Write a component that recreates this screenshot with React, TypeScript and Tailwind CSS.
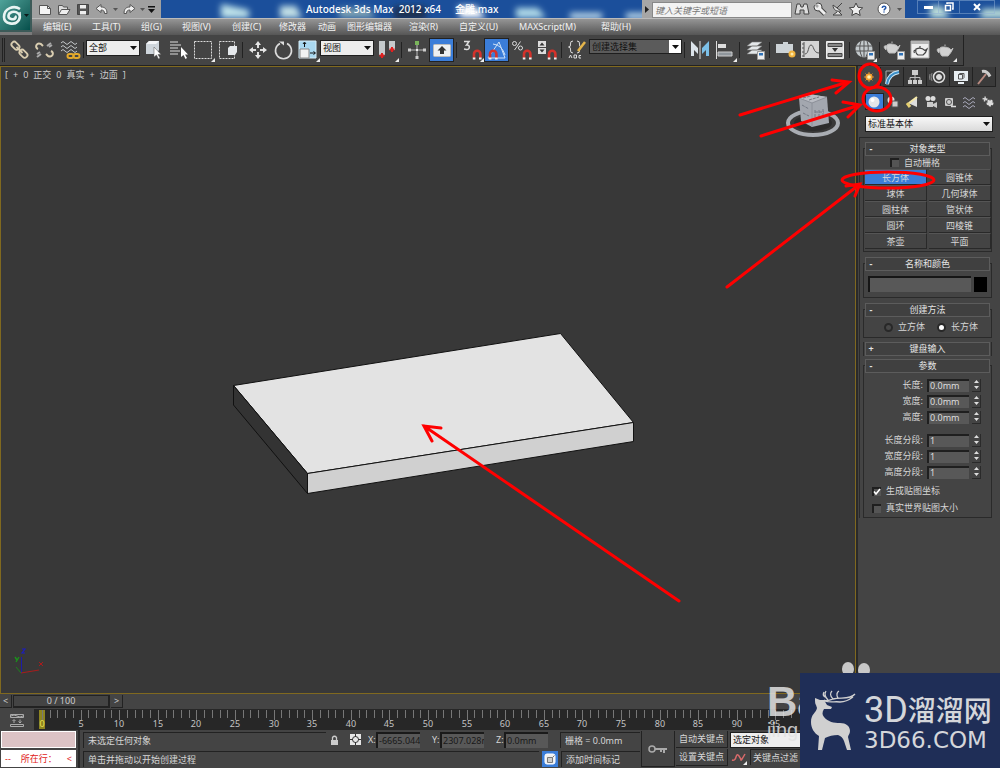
import { useState, type ReactNode } from "react";
import clsx from "clsx";

const menus = [
  { label: "编辑(E)", width: "w-[49px]" },
  { label: "工具(T)", width: "w-[49px]" },
  { label: "组(G)", width: "w-[41px]" },
  { label: "视图(V)", width: "w-[50px]" },
  { label: "创建(C)", width: "w-[47px]" },
  { label: "修改器", width: "w-[39px]" },
  { label: "动画", width: "w-[29px]" },
  { label: "图形编辑器", width: "w-[62px]" },
  { label: "渲染(R)", width: "w-[50px]" },
  { label: "自定义(U)", width: "w-[60px]" },
  { label: "MAXScript(M)", width: "w-[82px]" },
  { label: "帮助(H)", width: "w-[40px]" },
];

const objectTypes = [
  "长方体",
  "圆锥体",
  "球体",
  "几何球体",
  "圆柱体",
  "管状体",
  "圆环",
  "四棱锥",
  "茶壶",
  "平面",
];

function Svg({ children, size = 24 }: { children: ReactNode; size?: number }) {
  return (
    <svg
      width={size}
      height={size}
      viewBox={`0 0 ${size} ${size}`}
      fill="none"
      stroke="#dcdcdc"
      className="shrink-0"
      aria-hidden="true"
    >
      {children}
    </svg>
  );
}

function Tool({
  label,
  active,
  flyout,
  children,
}: {
  label: string;
  active?: boolean;
  flyout?: boolean;
  children: ReactNode;
}) {
  return (
    <button
      type="button"
      aria-label={label}
      className={clsx(
        "flex h-6 w-[25px] shrink-0 items-center justify-center overflow-hidden",
        active && "border border-[#222] bg-[#3b7dd8]"
      )}
    >
      <Svg>
        {children}
        {flyout && <path d="M24 20v4h-4z" fill="#eee" stroke="none" />}
      </Svg>
    </button>
  );
}

function Sep() {
  return (
    <div className="flex w-[5px] shrink-0 justify-center">
      <div className="h-4 w-px bg-[#222]" />
    </div>
  );
}

function Magnet() {
  return (
    <>
      <path d="M14 20v-4a3.2 3.2 0 0 1 6.4 0v4" stroke="#d3322b" strokeWidth="2.6" />
      <path d="M12.8 20.5h2.6M19 20.5h2.6" stroke="#eee" strokeWidth="2" />
    </>
  );
}

function Teapot() {
  return (
    <path
      d="M7 10c-1 3 0 6 2 8h6c2-2 4-5 5-8l-2 2c-1-3-10-4-11-2zM12 8V6.5M7 11c-3-1-4 1-1 4"
      fill="#d2d2d2"
      stroke="#bcbcbc"
    />
  );
}

function Card() {
  return (
    <>
      <path d="M14.500 13.500h7v8h-7z" fill="#eee" stroke="#999" />
      <path d="M16 15h4v2.500h-4z" fill="#2f72b8" stroke="none" />
    </>
  );
}

function Dropdown({
  label,
  options,
  className,
}: {
  label: string;
  options: string[];
  className: string;
}) {
  return (
    <div className={clsx("relative shrink-0", className)}>
      <select
        aria-label={label}
        className="block h-full w-full appearance-none border border-[#1e1e1e] bg-transparent pl-[2px] text-[9px] leading-3 text-inherit outline-none"
      >
        {options.map((o) => (
          <option key={o}>{o}</option>
        ))}
      </select>
      <svg
        width="7"
        height="4"
        className="pointer-events-none absolute top-1/2 right-[3px] -mt-[2px]"
        aria-hidden="true"
      >
        <path d="M0 0h7L3.500 4z" fill="#111" />
      </svg>
    </div>
  );
}

function TitleBar() {
  return (
    <div className="relative flex h-[18px] overflow-hidden bg-[#1b4f9b]">
      <svg className="absolute inset-0 h-full w-full" aria-hidden="true">
        <defs>
          <filter id="soft" x="-50%" y="-50%" width="200%" height="200%">
            <feGaussianBlur stdDeviation="3" />
          </filter>
        </defs>
        <g filter="url(#soft)">
          <path d="M189 4l28 6v8h-28z" fill="#bfe3ea" />
          <path d="M248 6h16l6 12h-22z" fill="#c3e0e6" />
          <path d="M306 8h30l8 10h-36z" fill="#7fa3b4" />
          <path d="M362 6h32v14h-32z" fill="#1b3152" />
          <path d="M426 6h18l10 12h-26z" fill="#fff" />
          <path d="M484 8h22l8 10h-30z" fill="#b2dce9" />
          <path d="M538 13h32v6h-32zM594 13h32v6h-32z" fill="#c7e2ee" />
          <path d="M898 6h12l8 12h-20zM950 9h24l6 9h-32z" fill="#bfe0da" />
        </g>
      </svg>
      <div className="relative flex w-[129px] shrink-0 items-center gap-[3px] bg-[#a0a0a0] pl-[5px]">
        <button type="button" aria-label="新建">
          <Svg size={16}>
            <path d="M2.500 4.500h8l3 3v6h-11z" fill="#f4f4f4" stroke="#555" />
            <path d="M10.500 4.500v3h3" stroke="#555" />
          </Svg>
        </button>
        <button type="button" aria-label="打开">
          <Svg size={16}>
            <path d="M2.500 13V4.500h4l1 1.500h4v2" fill="#ddd" stroke="#555" />
            <path d="M2.500 13.500l3-5h8.500l-3 5z" fill="#eee" stroke="#555" />
          </Svg>
        </button>
        <button type="button" aria-label="保存">
          <Svg size={16}>
            <path d="M2.500 3.500h11v10h-11z" fill="#555" stroke="#444" />
            <path d="M5 4h6v3.500H5zM5 10h6v3.500H5z" fill="#eee" stroke="none" />
          </Svg>
        </button>
        <button type="button" aria-label="撤消">
          <Svg size={16}>
            <path
              d="M2 7.500l5-4v2.500c4 0 6 2 6 6.500h-2.500c0-2.500-1-3.500-3.500-3.500v2.500z"
              fill="#eee"
              stroke="#555"
            />
          </Svg>
        </button>
        <svg width="5" height="3" aria-hidden="true">
          <path d="M0 0h5L2.500 3z" fill="#555" />
        </svg>
        <button type="button" aria-label="重做">
          <Svg size={16}>
            <path
              d="M14 7.500l-5-4v2.500c-4 0-6 2-6 6.500h2.500c0-2.500 1-3.500 3.500-3.500v2.500z"
              fill="#eee"
              stroke="#555"
            />
          </Svg>
        </button>
        <svg width="5" height="3" aria-hidden="true">
          <path d="M0 0h5L2.500 3z" fill="#555" />
        </svg>
        <svg width="7" height="7" aria-hidden="true">
          <path d="M0 0h7v1.500H0zM0 3h7L3.500 7z" fill="#111" />
        </svg>
      </div>
      <h1 className="relative flex min-w-0 flex-1 items-center gap-[14px] overflow-hidden pl-[145px] text-[10px] leading-4 font-medium whitespace-pre text-white">
        <span>Autodesk 3ds Max  2012 x64</span>
        <span>金雕.max</span>
      </h1>
      <div className="relative flex shrink-0 items-center bg-[#a6a6a6]">
        <button type="button" aria-label="展开" className="flex w-[10px] justify-center">
          <svg width="4" height="7" aria-hidden="true">
            <path d="M0 0v7l4-3.500z" fill="#222" />
          </svg>
        </button>
        <input
          type="search"
          aria-label="搜索"
          placeholder="键入关键字或短语"
          className="mt-[2px] h-4 w-[140px] border border-[#888] bg-[#f3f3f3] pl-[2px] text-[9px] italic outline-none placeholder:text-[#777]"
        />
        <div className="flex w-[113px] items-center pl-px">
          <button type="button" aria-label="搜索帮助">
            <Svg size={18}>
              <path
                d="M4 4h3l1 3h2l1-3h3l2 10h-5v-4H7v4H2z"
                fill="#ddd"
                stroke="#444"
              />
            </Svg>
          </button>
          <button type="button" aria-label="速博中心">
            <Svg size={18}>
              <path d="M8 8l6 6" stroke="#444" strokeWidth="5" />
              <circle cx="7" cy="7" r="4" fill="#eee" stroke="#444" />
              <path d="M8 8l6 6" stroke="#eee" strokeWidth="3" />
              <path d="M3 3l4 4" stroke="#a6a6a6" strokeWidth="2.500" />
            </Svg>
          </button>
          <button type="button" aria-label="通讯中心">
            <Svg size={18}>
              <path d="M4 5c0 5 4 7 8 6zM8 8l5-5M8 12l-4 3h9l-3-3" fill="#ddd" stroke="#444" />
            </Svg>
          </button>
          <button type="button" aria-label="收藏夹">
            <Svg size={18}>
              <path
                d="M9 3l2 4.300 4.700.5-3.500 3.100 1 4.600L9 13.200l-4.200 2.300 1-4.600-3.500-3.100L7 7.300z"
                fill="#eee"
                stroke="#444"
              />
            </Svg>
          </button>
          <button type="button" aria-label="帮助" className="ml-[10px]">
            <Svg size={18}>
              <circle cx="9" cy="9" r="6" fill="#fff" stroke="#555" />
              <path
                d="M7.300 8c0-2.500 3.500-2.300 3.500-.3 0 1.300-1.700 1.200-1.700 2.800M9 11.500v1"
                stroke="#2456a8"
                strokeWidth="1.500"
              />
            </Svg>
          </button>
          <svg width="5" height="3" className="ml-1" aria-hidden="true">
            <path d="M0 0h5L2.500 3z" fill="#555" />
          </svg>
        </div>
      </div>
      <div className="relative flex w-[95px] shrink-0 pl-3">
        <button
          type="button"
          aria-label="最小化"
          className="flex h-[14px] w-[22px] items-center justify-center border border-[#8fb0d6]/50"
        >
          <span className="h-[3px] w-[9px] bg-white" />
        </button>
        <button
          type="button"
          aria-label="还原"
          className="flex h-[14px] w-5 items-center justify-center border-y border-[#8fb0d6]/50"
        >
          <Svg size={12}>
            <path d="M4 3V2h6v6H9M2.500 4.500h5v5h-5z" stroke="#fff" strokeWidth="1.500" />
          </Svg>
        </button>
        <button
          type="button"
          aria-label="关闭"
          className="flex h-[14px] w-9 items-center justify-center border border-[#8fb0d6]/50"
        >
          <Svg size={12}>
            <path d="M3 3l6 6M9 3L3 9" stroke="#fff" strokeWidth="2" />
          </Svg>
        </button>
      </div>
    </div>
  );
}

function AppHeader() {
  return (
    <header className="flex bg-[#7a7a7a]">
      <button
        type="button"
        aria-label="应用程序"
        className="h-8 w-8 shrink-0 border-r-2 border-b-2 border-[#3c5a58] bg-linear-to-br from-[#4fa39a] to-[#04504c]"
      >
        <svg width="30" height="30" fill="none" stroke="#e8f4f2" aria-hidden="true">
          <path
            d="M20 9C14 5 4 8 4 17c0 7 11 9 15 3 3-6-3-9-7-8-4 1-5 6-1 7 3 1 6-1 4-3"
            strokeWidth="2.600"
          />
          <path d="M20 12c1 4-1 9-5 12" strokeWidth="1.500" />
          <path d="M24 14h5l-2.500 3z" fill="#0a1a1a" stroke="none" />
        </svg>
      </button>
      <div className="min-w-0 flex-1">
        <TitleBar />
        <nav className="flex h-[17px] items-center overflow-hidden border-t border-[#bbb] bg-linear-to-b from-[#959595] to-[#565656] pl-[11px] text-[9px] leading-4 whitespace-nowrap text-[#f2f2f2]">
          {menus.map((m) => (
            <button key={m.label} type="button" className={clsx("shrink-0 text-left", m.width)}>
              {m.label}
            </button>
          ))}
        </nav>
      </div>
    </header>
  );
}

function Toolbar() {
  return (
    <div className="flex h-[31px] bg-[#444]">
      <div
        role="toolbar"
        aria-label="主工具栏"
        className="flex w-[964px] items-center border-r border-b border-[#222]"
      >
        <div className="mr-px ml-[2px] h-6 w-[3px] shrink-0 border-x border-[#222]" />
        <Tool label="选择并链接">
          <g stroke="#d9cdb0" strokeWidth="1.800">
            <rect x="4" y="5" width="9" height="5.500" rx="2.700" transform="rotate(45 8.500 7.700)" />
            <rect x="12" y="13" width="9" height="5.500" rx="2.700" transform="rotate(45 16.500 15.700)" />
            <path d="M9.500 9l6 6" />
          </g>
        </Tool>
        <Tool label="取消链接选择">
          <g stroke="#d9cdb0" strokeWidth="2">
            <path d="M6 11c-4-2-1-7 3-5l2 2M19 13c4 2 1 7-3 5l-2-2" />
          </g>
          <path d="M15 8l4-3M17 9l3-2M5 19l4-3M5 16l3-2" stroke="#aaa" strokeWidth="2" />
        </Tool>
        <Tool label="绑定到空间扭曲">
          <path
            d="M4 5q2-3 4 0t4 0t4 0t4 0M4 9q2-3 4 0t4 0t4 0t4 0M4 13q2-3 4 0t4 0t4 0t4 0"
            stroke="#c4c8ca"
          />
          <rect x="10.500" y="16" width="6" height="4" rx="2" stroke="#e3a92b" strokeWidth="2" />
          <rect x="16.500" y="16" width="6" height="4" rx="2" stroke="#e3a92b" strokeWidth="2" />
        </Tool>
        <Sep />
        <Dropdown
          label="选择过滤器"
          options={["全部"]}
          className="mb-1 h-4 w-[54px] bg-[#ededed] text-[#111]"
        />
        <Tool label="选择对象">
          <path d="M5 6l3-3h10v9l-3 4H5z" fill="#cfd6dc" stroke="none" />
          <path d="M5 6l3-3h10l-3 3z" fill="#f4f6f8" stroke="none" />
          <path d="M13 9v10l2.500-2 2 4 1.500-1-2-3.500h3z" fill="#fff" stroke="#555" strokeWidth=".5" />
        </Tool>
        <Tool label="按名称选择">
          <path d="M4 4h8M4 7h11M4 10h8M4 13h10M4 16h8" strokeWidth="1.200" />
          <path d="M15 9v10l2.500-2 2 4 1.500-1-2-3.500h3z" fill="#fff" stroke="none" />
        </Tool>
        <Tool label="矩形选择区域" flyout>
          <path d="M3.500 3.500h17v17h-17z" strokeDasharray="2 1" />
        </Tool>
        <Tool label="窗口/交叉">
          <path d="M3.500 3.500h15v17h-15z" strokeDasharray="2 1" />
          <path d="M12 10l2-2h7v6l-2 3h-7z" fill="#e6e9ec" stroke="none" />
        </Tool>
        <Sep />
        <Tool label="选择并移动">
          <path d="M12 7v3M12 14v3M7 12h3M14 12h3" strokeWidth="2" />
          <path
            d="M12 3l3 4H9zM12 21l3-4H9zM3 12l4-3v6zM21 12l-4-3v6z"
            fill="#e6e6e6"
            stroke="none"
          />
        </Tool>
        <Tool label="选择并旋转">
          <path d="M9 5.500a8 8 0 1 0 7 0" strokeWidth="1.600" />
          <path d="M8 3.500h5v4z" fill="#ddd" stroke="none" />
        </Tool>
        <Tool label="选择并均匀缩放" flyout>
          <path d="M3 3h17v17H3z" fill="#a9d8f0" stroke="#d5ecf7" />
          <path d="M4 11h9v9H4z" fill="#f2f2f2" stroke="#888" />
          <path d="M8.500 9V5M7 6l1.500-2L10 6M14 15h5M17.500 13.500l2 1.500-2 1.500" stroke="#111" />
        </Tool>
        <Dropdown
          label="参考坐标系"
          options={["视图"]}
          className="mb-1 h-4 w-[54px] bg-[#ededed] text-[#111]"
        />
        <Tool label="使用轴点中心" flyout>
          <path d="M4 3h6v14H4zM14 3h6v9h-6z" fill="#c6cacc" stroke="none" />
          <path d="M7 15v5M4.500 17.500h5M17 9v5M14.500 11.500h5" stroke="#e02020" strokeWidth="2" />
        </Tool>
        <Sep />
        <Tool label="选择并操纵">
          <path d="M12 6v14M5 12h14" stroke="#bbb" />
          <path d="M10 3h4v4h-4z" fill="#79b45a" stroke="none" />
          <path d="M3 10.500h3v3H3zM18 10.500h3v3h-3zM10.500 18h3v3h-3z" fill="#ccc" stroke="none" />
          <path d="M11 11h2v2h-2z" fill="#eee" stroke="none" />
        </Tool>
        <Tool label="键盘快捷键覆盖切换" active>
          <rect x="3.500" y="6.500" width="17" height="12" rx="1" fill="#eef0f2" stroke="#bbb" />
          <path d="M12 8l4.500 4.500H14V16h-4v-3.500H7.500z" fill="#333" stroke="none" />
        </Tool>
        <Sep />
        <Tool label="捕捉开关" flyout>
          <path d="M4 3.500h5L6.500 7c4-.5 3.500 5 0 4.500L4 11" strokeWidth="1.500" />
          <Magnet />
        </Tool>
        <Tool label="角度捕捉切换" active>
          <path d="M3 20L14 4l6 16zM8 6q9 1 12 11" stroke="#cfe2f7" />
          <g transform="translate(-9 0)">
            <Magnet />
          </g>
        </Tool>
        <Tool label="百分比捕捉切换">
          <circle cx="4.500" cy="5.500" r="2" />
          <circle cx="10.500" cy="10" r="2" />
          <path d="M10.500 3.500l-6 8.500" />
          <Magnet />
        </Tool>
        <Tool label="微调器捕捉切换">
          <path d="M3 3h8v6H3zM3 10h8v6H3z" fill="#ddd" stroke="none" />
          <path d="M7 4.500l2.500 3h-5zM7 14.500l2.500-3h-5z" fill="#333" stroke="none" />
          <Magnet />
        </Tool>
        <Sep />
        <Tool label="编辑命名选择集">
          <path d="M8 3q-3 0-2.500 3t-2 3q2.500 0 2 3T8 15M12 3q3 0 2.500 3t2 3q-2.500 0-2 3T12 15" />
          <path d="M20 4l-7 9" stroke="#e5b54a" strokeWidth="2.500" />
          <path d="M4 20l1.500-3 1.500 3M9 17v3h2.500v-3zM16 17.500h-2v2.500h2" strokeWidth="1" />
        </Tool>
        <Dropdown
          label="命名选择集"
          options={["创建选择集"]}
          className="mb-[7px] h-[15px] w-[93px] bg-linear-to-l from-white from-[13px] to-[#5b5b5b] to-[13px] text-[#111]"
        />
        <Sep />
        <Tool label="镜像">
          <path d="M3 3l7 7V3v13l-4-4v6H3z" fill="#dce4ea" stroke="none" />
          <path d="M21 3l-7 7v6l4-4v6h3z" fill="#7cc0e8" stroke="none" />
          <path d="M12 3v18" stroke="#ddd" />
        </Tool>
        <Tool label="对齐" flyout>
          <path d="M3.500 3v18" />
          <path d="M5 6h8v4H5z" fill="#ddd" stroke="none" />
          <path d="M5 14h14v4H5z" fill="#8f969c" stroke="#ccc" />
        </Tool>
        <Sep />
        <Tool label="层管理器">
          <path
            d="M4 16l5-4h10l-5 4zM4 12l5-4h10l-5 4zM4 8l5-4h10l-5 4z"
            fill="#e4e8ea"
            stroke="#777"
            strokeWidth=".6"
          />
          <Card />
        </Tool>
        <Sep />
        <Tool label="石墨建模工具">
          <path d="M3 6h7V4h5v2h5v9H3z" fill="#cdd3d7" stroke="none" />
          <circle cx="19" cy="16" r="3.500" fill="#f0b23c" stroke="none" />
          <circle cx="19" cy="16" r="1.500" fill="#ffe9a8" stroke="none" />
        </Tool>
        <Tool label="曲线编辑器">
          <path d="M3 3h18v17H3z" fill="#d5d5d5" stroke="none" />
          <path d="M6 4v15M4 6h2M4 10h2M4 14h2M4 18h2M7 16c4 0 3-9 6-9s2 8 8 8" stroke="#555" />
        </Tool>
        <Tool label="图解视图">
          <path d="M3.500 3.500h17v17h-17z" fill="#ddd" stroke="#eee" />
          <path d="M5 5.500h14v3H5zM5 15.500h14v3H5z" fill="#888" stroke="#444" />
          <path d="M9 10h6l-3 4z" fill="#333" stroke="none" />
        </Tool>
        <Sep />
        <Tool label="材质编辑器" flyout>
          <circle cx="11" cy="11" r="8.500" fill="#c3c9cc" stroke="none" />
          <path d="M3 8h16M3 13h16M8 3q-3 8 1 16M14 3q3 8-1 16M11 2v18" stroke="#555" />
          <Card />
        </Tool>
        <Sep />
        <Tool label="渲染设置">
          <g transform="translate(-3 -3)">
            <Teapot />
          </g>
          <Card />
        </Tool>
        <Tool label="渲染帧窗口">
          <path d="M3 3h18v17H3z" fill="#eee" stroke="#aaa" />
          <path d="M3 3h18v3H3z" fill="#b5b5b5" stroke="none" />
          <path
            d="M8 11q-1 4 2 6h5q3-2 4-6l-2 1.500q-4-4-9-1.500zM8 12q-3 0-1.500 3M12 9.500V8"
            stroke="#444"
            strokeWidth="1.200"
          />
        </Tool>
        <Tool label="渲染产品" flyout>
          <Teapot />
        </Tool>
      </div>
    </div>
  );
}

function Viewport() {
  return (
    <section
      aria-label="视口"
      className="relative min-w-0 flex-1 border border-[#80691f] bg-[#383838]"
    >
      <p className="flex gap-[5px] pt-[2px] pl-1 text-[9px] leading-3 text-[#ccc]">
        <span>[</span>
        <span>+</span>
        <span>0</span>
        <span>正交</span>
        <span>0</span>
        <span>真实</span>
        <span>+</span>
        <span>边面</span>
        <span>]</span>
      </p>
      <svg className="absolute inset-0 h-full w-full" fill="none" aria-hidden="true">
        {/* box primitive */}
        <g stroke="#111" strokeLinejoin="round">
          <path d="M232.500 318.500L559.500 266.500L632.500 355.500L306.500 406.500z" fill="#e3e3e3" />
          <path d="M306.500 406.500L632.500 355.500V374.500L306.500 426.500z" fill="#d0d0d0" />
          <path d="M232.500 318.500L306.500 406.500V426.500L232.500 338z" fill="#333" />
        </g>
        {/* view cube */}
        <ellipse cx="812" cy="56" rx="25" ry="12" stroke="#a9adb3" strokeWidth="4" />
        <ellipse cx="812" cy="56" rx="19" ry="8" fill="#2c2c2c" />
        <path d="M798 31l10-4 18 3 2 26-17 4-11-6z" fill="#a3a7af" />
        <path d="M798 31l10-4 18 3-15 6z" fill="#b9bcc3" />
        <path
          d="M802 31l8-2M808 33l10-3M801 38l7 4M802 46l6 3M814 45h9M814 43v10M818 43v9M822 42v9"
          stroke="#747984"
          strokeDasharray="3 1"
        />
        <path d="M811 36v24M798 31l13 5 15-6" stroke="#8c9099" />
        {/* axis tripod */}
        <path d="M20.500 606V590" stroke="#1c1ca8" />
        <path d="M20 606l18-3" stroke="#a81c1c" />
        <path d="M20 606l-5-6" stroke="#1c801c" />
        <path d="M21 582h3l-3 4h3" stroke="#1c1cc0" strokeWidth="1.200" />
        <path d="M38 595l4 4M42 595l-4 4" stroke="#a81c1c" />
        <path d="M14 590l2 3M18 590l-3 5" stroke="#1c901c" strokeWidth="1.400" />
      </svg>
    </section>
  );
}

function Rollout({
  title,
  closed,
  children,
}: {
  title: string;
  closed?: boolean;
  children?: ReactNode;
}) {
  return (
    <section
      className={clsx(
        "mx-[3px] mt-[10px] border border-[#2a2a2a]",
        closed ? "-mb-px border-y-0" : "mb-[11px]"
      )}
    >
      <h2 className="mx-px -mt-[7px]">
        <button
          type="button"
          aria-expanded={!closed}
          className="flex h-[14px] w-full items-center border border-[#5c5c5c] bg-[#404040] text-[9px] leading-3 text-[#e4e4e4]"
        >
          <span className="w-[10px] text-center font-bold">{closed ? "+" : "-"}</span>
          <span className="flex-1 pr-[10px] text-center">{title}</span>
        </button>
      </h2>
      {children}
    </section>
  );
}

function Spinner({ id, label, value }: { id: string; label: string; value: string }) {
  return (
    <div className="flex h-4 items-center justify-end pr-[10px]">
      <label htmlFor={id} className="pr-1">
        {label}
      </label>
      <input
        id={id}
        defaultValue={value}
        className="h-[13px] w-[42px] border-t-2 border-l-2 border-[#1f1f1f] bg-[#585858] pb-px pl-px text-[9px] leading-[10px] text-[#ddd] outline-none"
      />
      <button
        type="button"
        aria-label={`调整${label}`}
        className="ml-[3px] flex h-[13px] w-[9px] items-center justify-center border-r border-b border-[#2a2a2a]"
      >
        <svg width="5" height="9" aria-hidden="true">
          <path d="M0 3h5L2.500 0zM0 6h5L2.500 9z" fill="#ddd" />
        </svg>
      </button>
    </div>
  );
}

function Check({ label, checked }: { label: string; checked?: boolean }) {
  return (
    <label className="flex items-center gap-[5px]">
      <span className="grid h-[9px] w-[9px] shrink-0">
        <input
          type="checkbox"
          defaultChecked={checked}
          className="peer col-start-1 row-start-1 h-[9px] w-[9px] appearance-none border-t-2 border-l-2 border-[#1f1f1f] bg-[#555]"
        />
        <svg
          width="9"
          height="9"
          className="pointer-events-none invisible col-start-1 row-start-1 peer-checked:visible"
          aria-hidden="true"
        >
          <path d="M2 4.500l2 2.500 4-5" fill="none" stroke="#fff" strokeWidth="1.600" />
        </svg>
      </span>
      {label}
    </label>
  );
}

function Radio({ label, checked }: { label: string; checked?: boolean }) {
  return (
    <label className="flex items-center gap-[5px]">
      <input
        type="radio"
        name="method"
        defaultChecked={checked}
        className="h-[9px] w-[9px] appearance-none rounded-full border-2 border-[#282828] bg-[#484848] checked:bg-white"
      />
      {label}
    </label>
  );
}

function PanelTab({
  label,
  active,
  children,
}: {
  label: string;
  active?: boolean;
  children: ReactNode;
}) {
  return (
    <button
      type="button"
      role="tab"
      aria-label={label}
      aria-selected={!!active}
      className={clsx(
        "flex h-5 items-center justify-center border-r border-[#222]",
        active ? "bg-[#444]" : "border-b bg-[#3a3a3a]"
      )}
    >
      <Svg size={18}>{children}</Svg>
    </button>
  );
}

function Category({
  label,
  active,
  children,
}: {
  label: string;
  active?: boolean;
  children: ReactNode;
}) {
  return (
    <button
      type="button"
      aria-label={label}
      className={clsx(
        "flex h-[17px] items-center justify-center",
        active && "border border-[#222] bg-[#3b7dd8]"
      )}
    >
      <Svg size={16}>{children}</Svg>
    </button>
  );
}

function CommandPanel() {
  const [type, setType] = useState("长方体");

  return (
    <aside className="w-[144px] shrink-0 border-l-2 border-[#2a2a2a] bg-[#444] text-[9px] leading-3 text-[#d6d6d6]">
      <div role="tablist" className="grid grid-cols-6 pt-px pr-1">
        <PanelTab label="创建" active>
          <path d="M9 4v10M4 9h10M5.500 5.500l7 7M12.500 5.500l-7 7" stroke="#d98a2a" />
          <circle cx="9" cy="9" r="3.500" fill="#f0a030" stroke="none" />
          <circle cx="9" cy="9" r="1.800" fill="#fff2b0" stroke="none" />
        </PanelTab>
        <PanelTab label="修改">
          <path d="M3 16V3h13M3 16h3" stroke="#aaa" />
          <path d="M4 16C5 9 9 5 16 4" stroke="#cfe8f6" strokeWidth="4" />
          <path d="M4 16C5 9 9 5 16 4" stroke="#3b8fc8" strokeWidth="2" />
        </PanelTab>
        <PanelTab label="层次">
          <path d="M6 2h6v5H6zM2 12h4v4H2zM7 12h4v4H7zM12 12h4v4h-4z" fill="#ccc" stroke="none" />
          <path d="M9 7v5M4 12V9.500h10V12" stroke="#bbb" />
        </PanelTab>
        <PanelTab label="运动">
          <circle cx="10" cy="9" r="5.500" strokeWidth="1.500" />
          <circle cx="10" cy="9" r="2.500" fill="#ddd" />
          <path d="M3 5q-2 4 0 8M1 6q-1 3 0 6" stroke="#888" />
        </PanelTab>
        <PanelTab label="显示">
          <path d="M2 3h14v10H2zM6 14h6v2H6z" fill="#e8eef2" stroke="none" />
          <path d="M6.500 6.500l1.500-1h4v4l-1.500 1.500h-4zM6.500 6.500h4V11" stroke="#555" />
        </PanelTab>
        <PanelTab label="实用程序">
          <path d="M3 16l8-10" stroke="#b98a80" strokeWidth="2" />
          <path d="M7 3.500q5-1 8 5" stroke="#ccc" strokeWidth="3" />
        </PanelTab>
      </div>
      <div className="grid grid-cols-7 pt-[6px] pr-[3px] pl-[7px]">
        <Category label="几何体" active>
          <circle cx="8" cy="8" r="5.500" fill="#e4e6e8" stroke="none" />
          <circle cx="6.500" cy="6" r="2" fill="#fff" stroke="none" />
        </Category>
        <Category label="图形">
          <circle cx="6" cy="6" r="3.500" fill="#ddd" stroke="none" />
          <path d="M7 7h6v6H7z" fill="#ccc" stroke="#555" />
        </Category>
        <Category label="灯光">
          <path d="M13 3v10L4 9z" fill="#ddd" stroke="none" />
          <path d="M3 9l3 4" stroke="#e5cf70" strokeWidth="3" />
          <path d="M13 3L5 9" stroke="#f4e7a8" strokeWidth="2" />
        </Category>
        <Category label="摄影机">
          <circle cx="5" cy="4.500" r="2.500" fill="#ddd" stroke="none" />
          <circle cx="10" cy="4.500" r="2.500" fill="#ddd" stroke="none" />
          <path d="M4 8h6v5H4zM10 10l4-2v6l-4-2z" fill="#ccc" stroke="none" />
        </Category>
        <Category label="辅助对象">
          <rect x="3" y="4" width="8" height="8" rx="1" fill="#ccc" stroke="none" />
          <circle cx="7" cy="8" r="2.500" stroke="#555" />
          <path d="M9 12.500h5" stroke="#ddd" strokeWidth="1.500" />
        </Category>
        <Category label="空间扭曲">
          <path
            d="M2 5q2-3 4 0t4 0t4 0M2 9q2-3 4 0t4 0t4 0M2 13q2-3 4 0t4 0t4 0"
            stroke="#aab"
          />
        </Category>
        <Category label="系统">
          <circle cx="5" cy="5" r="1.500" fill="#ccc" strokeDasharray="1 1" strokeWidth="2" />
          <circle cx="10" cy="9" r="2.500" fill="#ddd" strokeDasharray="2 1" strokeWidth="2" />
        </Category>
      </div>
      <Dropdown
        label="子类别"
        options={["标准基本体"]}
        className="mx-[7px] mt-[6px] h-4 bg-linear-to-b from-[#fafafa] to-[#d8d8d8] text-[#111]"
      />
      <div className="mt-[5px] mr-[5px] ml-px border-t border-l border-[#2a2a2a]">
        <Rollout title="对象类型">
          <div className="flex h-[13px] items-center pl-[26px]">
            <Check label="自动栅格" />
          </div>
          <div className="grid grid-cols-2 gap-x-[2px] pb-[2px] pl-px">
            {objectTypes.map((name) => (
              <button
                key={name}
                type="button"
                aria-pressed={type === name}
                onClick={() => setType(name)}
                className={clsx(
                  "h-4 border-t border-r border-b border-t-[#555] border-r-[#292929] border-b-[#292929] leading-[13px]",
                  type === name && "bg-[#3b7dd8]"
                )}
              >
                {name}
              </button>
            ))}
          </div>
        </Rollout>
        <Rollout title="名称和颜色">
          <div className="flex h-[26px] items-center gap-[3px] px-1">
            <input
              aria-label="名称"
              className="h-4 min-w-0 flex-1 border-t-2 border-l-2 border-[#161616] bg-[#585858] outline-none"
            />
            <button type="button" aria-label="颜色" className="h-[15px] w-[13px] bg-black" />
          </div>
        </Rollout>
        <Rollout title="创建方法">
          <div className="flex h-5 items-center gap-3 pl-5">
            <Radio label="立方体" />
            <Radio label="长方体" checked />
          </div>
        </Rollout>
        <Rollout title="键盘输入" closed />
        <Rollout title="参数">
          <div className="pt-1">
            <Spinner id="length" label="长度:" value="0.0mm" />
            <Spinner id="width" label="宽度:" value="0.0mm" />
            <Spinner id="height" label="高度:" value="0.0mm" />
          </div>
          <div className="pt-[7px]">
            <Spinner id="length-segs" label="长度分段:" value="1" />
            <Spinner id="width-segs" label="宽度分段:" value="1" />
            <Spinner id="height-segs" label="高度分段:" value="1" />
          </div>
          <div className="flex flex-col gap-[5px] pt-[5px] pb-[3px] pl-2">
            <Check label="生成贴图坐标" checked />
            <Check label="真实世界贴图大小" />
          </div>
        </Rollout>
      </div>
    </aside>
  );
}

function TimeControls() {
  const ticks = Array.from({ length: 98 }, (_, i) => i);

  return (
    <>
      <div className="flex h-[15px] items-center gap-px bg-[#444] text-[9px] leading-3 text-[#ccc]">
        <button type="button" className="h-[13px] w-3 border-r border-b border-[#222]">
          &lt;
        </button>
        <button
          type="button"
          className="h-[13px] w-[97px] border border-r-2 border-b-2 border-[#222] leading-[10px]"
        >
          0 / 100
        </button>
        <button type="button" className="h-[13px] w-3 border-r border-b border-[#222]">
          &gt;
        </button>
      </div>
      <div className="flex h-[21px] bg-[#272727]">
        <button
          type="button"
          aria-label="打开迷你曲线编辑器"
          className="flex w-[34px] shrink-0 items-center justify-center bg-[#444]"
        >
          <Svg size={16}>
            <g stroke="#aaa">
              <path d="M1.500 2.500h13v3h-13zM1.500 12.500h13v2h-13zM2 4q3-2 6 0t6 0" />
              <path d="M5 11V8M3.500 9L5 7.500 6.500 9M11 7.500V11M9.500 9.500L11 11l1.500-1.500" />
            </g>
          </Svg>
        </button>
        <svg className="h-full min-w-0 flex-1" aria-label="轨迹栏">
          <rect x="5" y="1" width="6" height="19" fill="#8d8420" />
          {ticks.map((i) => (
            <path
              key={i}
              d={`M${Math.round(8 + i * 7.72) + 0.5} 1v${i % 5 ? 8 : 10}`}
              stroke="#777"
            />
          ))}
          {ticks
            .filter((i) => i % 5 === 0)
            .map((i) => (
              <text
                key={i}
                x={Math.round(8 + i * 7.72)}
                y="18"
                textAnchor="middle"
                fontSize="9"
                fill={i ? "#c4c4c4" : "#e8df50"}
              >
                {i}
              </text>
            ))}
        </svg>
      </div>
    </>
  );
}

function Coord({ axis, value }: { axis: string; value: string }) {
  return (
    <label className="flex shrink-0 items-center pr-3">
      <span className="w-2">{axis}:</span>
      <input
        defaultValue={value}
        className="h-4 w-[44px] border-t-2 border-l-2 border-[#1a1a1a] bg-[#585858] pl-px text-[9px] text-[#181818] outline-none"
      />
    </label>
  );
}

function StatusBar() {
  return (
    <footer className="flex h-[38px] overflow-hidden bg-[#444] text-[9px] leading-3 whitespace-nowrap text-[#d6d6d6]">
      <div className="flex w-[80px] shrink-0 flex-col gap-[2px] border-r-2 border-[#2a2a2a] py-px pr-[2px] pl-px">
        <input
          aria-label="宏录制器"
          className="h-[17px] w-full border border-white bg-[#dcc3c5] outline-none"
        />
        <div className="flex h-[17px] items-center justify-between bg-white px-1 text-[#e02020]">
          <span>--</span>
          <span>所在行：</span>
          <span>&lt;</span>
        </div>
      </div>
      <div className="flex w-[560px] shrink-0 flex-col gap-[3px] py-px pl-[3px]">
        <div className="flex h-[17px] items-center">
          <output className="h-4 w-[243px] border-t border-l border-[#222] pl-1 leading-[15px]">
            未选定任何对象
          </output>
          <button type="button" aria-label="选择锁定切换">
            <Svg size={16}>
              <path d="M5 8h7v5H5z" fill="#ccc" stroke="none" />
              <path d="M6.500 8V5.500q2-2.500 4 0V8" stroke="#ccc" strokeWidth="1.300" />
            </Svg>
          </button>
          <button type="button" aria-label="绝对模式变换输入" className="mr-1 ml-[6px]">
            <Svg size={16}>
              <path d="M2 2h11v11H2z" fill="#e6e6e6" stroke="none" />
              <circle cx="7.500" cy="7.500" r="3" stroke="#333" />
              <path d="M7.500 2v3M7.500 10v3M2 7.500h3M10 7.500h3" stroke="#333" />
            </Svg>
          </button>
          <Coord axis="X" value="-6665.044m" />
          <Coord axis="Y" value="2307.028mm" />
          <Coord axis="Z" value="0.0mm" />
          <output className="h-4 min-w-0 flex-1 border-t border-l border-[#222] pl-1 leading-[15px]">
            栅格 = 0.0mm
          </output>
        </div>
        <div className="flex h-4 items-center gap-[3px]">
          <output className="h-4 min-w-0 flex-1 border-t border-l border-[#222] pl-1 leading-[15px]">
            单击并拖动以开始创建过程
          </output>
          <button
            type="button"
            aria-label="自适应降级"
            className="flex h-4 w-4 items-center justify-center bg-[#3b7dd8]"
          >
            <Svg size={14}>
              <rect x="2" y="2" width="10" height="10" rx="2" fill="#eee" stroke="#fff" />
              <path d="M4.500 5.500h5v5h-5zM9.500 5.500l2-2" fill="#ccc" stroke="#777" />
            </Svg>
          </button>
          <button
            type="button"
            className="h-4 w-[79px] border-t border-l border-[#222] pl-1 text-left leading-[15px]"
          >
            添加时间标记
          </button>
        </div>
      </div>
      <button
        type="button"
        aria-label="设置关键点"
        className="m-px flex w-[34px] shrink-0 items-center justify-center border-r border-b border-l border-[#222]"
      >
        <Svg size={20}>
          <circle cx="4" cy="10" r="3" stroke="#aaa" strokeWidth="1.500" />
          <path d="M7 10h12M16 10v4M13 10v3" stroke="#aaa" strokeWidth="2" />
        </Svg>
      </button>
      <div className="flex w-[52px] shrink-0 flex-col gap-px py-px">
        <button type="button" className="h-[17px] border-r border-b border-[#222]">
          自动关键点
        </button>
        <button type="button" className="h-[17px] border-r border-b border-[#222]">
          设置关键点
        </button>
      </div>
      <div className="min-w-0 flex-1 py-[2px] pl-[2px]">
        <Dropdown
          label="关键点选择集"
          options={["选定对象"]}
          className="h-4 w-[120px] bg-[#eee] text-[#111]"
        />
        <div className="flex h-[18px] items-center">
          <button type="button" aria-label="新建关键点的默认切线">
            <Svg size={18}>
              <path d="M2 12q3 1 4-3t3-1 2 4 4-6" stroke="#d86a6a" strokeWidth="1.500" />
              <path d="M17 13v4h-4z" fill="#eee" stroke="none" />
            </Svg>
          </button>
          <button type="button" className="ml-[2px] h-4 border-t border-l border-[#222] px-[2px]">
            关键点过滤
          </button>
        </div>
      </div>
    </footer>
  );
}

function Watermark() {
  return (
    <div className="absolute right-0 bottom-0 flex w-[233px] items-end">
      <div className="pointer-events-none h-[84px] w-[33px] overflow-hidden font-[Liberation_Sans] text-[#e2e2e2]/85">
        <p className="text-[42px] leading-9 font-bold">Ba</p>
        <p className="text-xl leading-5">jing</p>
      </div>
      <div className="w-[200px]">
        <svg width="30" height="12" className="ml-[41px] block" aria-hidden="true">
          <ellipse cx="7" cy="8" rx="6" ry="7" fill="#c8c8c8" />
          <ellipse cx="23" cy="9" rx="6" ry="7" fill="#c8c8c8" />
        </svg>
        <div className="flex h-[95px] bg-[#1f2e57] text-[#d4d6da]">
          <svg width="62" height="95" className="shrink-0" fill="none" aria-hidden="true">
            <path
              d="M15 25l5 2 4 0 3 5 5 2-1 2-7 0c-2 3-2 6 0 8 4 5 10 6 16 6 6 0 10 3 10 8 0 3-2 4-2 6l3 13h-4l-3-9c-1-3-3-5-6-6-5 0-9 1-13 3l-3 12h-4l1-14c-5-3-8-8-8-14 0-8 5-9 6-14l-1-3c-1-1-1-4-1-6z"
              fill="#d0d0d0"
            />
            <path
              d="M24 27c3 2 6 0 9-1 8-2 17 1 22-5M24 28c7 2 11 0 16 1 5 0 9-2 13-5M28 27c-3-3-4-6-2-9M33 26c-3-3-3-6-1-8M38 25c-2-3-1-6 1-7M25 24c-2-1-2-3-1-5"
              stroke="#d0d0d0"
              strokeWidth="1.300"
            />
          </svg>
          <div className="flex min-w-0 flex-1 flex-col pt-[19px] pl-[2px] whitespace-nowrap">
            <p className="flex h-[36px] items-center">
              <span className="font-[Roboto] text-[36px] leading-9">3D</span>
              <span className="text-[28px] leading-9 font-medium">溜溜网</span>
            </p>
            <p className="font-[DejaVu_Sans] text-[23px] leading-6">3D66.COM</p>
          </div>
        </div>
      </div>
    </div>
  );
}

function Annotations() {
  return (
    <svg
      width="1000"
      height="768"
      className="pointer-events-none absolute top-0 left-0"
      fill="none"
      stroke="#f00"
      strokeWidth="3"
      strokeLinecap="round"
      aria-hidden="true"
    >
      <ellipse cx="870" cy="76" rx="11" ry="12" />
      <ellipse cx="877" cy="99" rx="14" ry="12" />
      <ellipse cx="888" cy="180" rx="46" ry="8" />
      <path d="M740 115L848 82M832 80l17 2-13 11" />
      <path d="M761 136L860 105M843 102l17 3-12 12" />
      <path d="M727 287L860 184M846 186l14-2-5 12" />
      <path d="M679 601L424 426M441 428l-17-2 8 15" />
    </svg>
  );
}

export default function App() {
  return (
    <div className="relative flex min-h-screen flex-col overflow-hidden bg-[#444] font-['Noto_Sans','Noto_Sans_CJK_SC',sans-serif]">
      <AppHeader />
      <Toolbar />
      <main className="flex flex-1">
        <Viewport />
        <CommandPanel />
      </main>
      <TimeControls />
      <StatusBar />
      <Watermark />
      <Annotations />
    </div>
  );
}
